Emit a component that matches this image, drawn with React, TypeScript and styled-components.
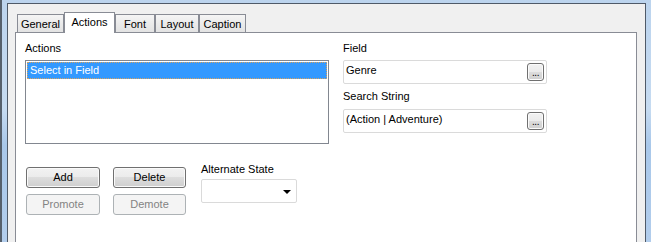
import styled, { createGlobalStyle } from 'styled-components'

const GlobalStyle = createGlobalStyle`
  html, body {
    margin: 0;
    padding: 0;
    overflow: hidden;
  }
  body {
    background: #b6cfea;
    font-family: "Liberation Sans", Arial, sans-serif;
    font-size: 11px;
    color: #000;
  }
`

const Desktop = styled.div`
  height: 242px;
  overflow: hidden;
  border-left: 2px solid #56606c;
  background: linear-gradient(180deg, #bcd4ee 0%, #c6dbf1 45%, #a9c8ea 60%, #b2cdec 100%);
  padding: 3px 5px 0 5px;
  box-sizing: border-box;
`

const Frame = styled.div`
  width: 639px;
  height: 260px;
  box-sizing: border-box;
  background: #f0f0f0;
  border: 1px solid #4f5a68;
  border-bottom: none;
  padding: 8px 0 0 7px;
  display: flex;
  flex-direction: column;
`

const TabStrip = styled.div`
  display: flex;
  align-items: flex-start;
  padding-left: 2px;
  height: 20px;
`

const Tab = styled.div<{ $active?: boolean; $w: number }>`
  position: relative;
  z-index: ${p => (p.$active ? 2 : 1)};
  box-sizing: border-box;
  width: ${p => p.$w}px;
  height: ${p => (p.$active ? 21 : 18)}px;
  margin-top: ${p => (p.$active ? 0 : 2)}px;
  padding-top: 3px;
  line-height: 13px;
  text-align: center;
  border: 1px solid #898c95;
  border-bottom: none;
  background: ${p =>
    p.$active ? '#ffffff' : 'linear-gradient(180deg, #f5f5f5 0%, #ebebeb 50%, #e3e3e3 100%)'};
  white-space: nowrap;
`

const Panel = styled.div`
  width: 622px;
  height: 260px;
  box-sizing: border-box;
  background: #fff;
  border: 1px solid #898c95;
  padding: 9px 0 0 9px;
`

const TopRow = styled.div`
  display: flex;
  gap: 14px;
`

const Column = styled.div<{ $w: number }>`
  display: flex;
  flex-direction: column;
  width: ${p => p.$w}px;
`

const Label = styled.div<{ $gap?: number }>`
  line-height: 13px;
  height: 13px;
  margin-top: ${p => p.$gap ?? 0}px;
  white-space: nowrap;
`

const ListBox = styled.div`
  margin-top: 5px;
  height: 84px;
  box-sizing: border-box;
  border: 1px solid #828790;
  padding: 1px;
`

const ListItem = styled.div`
  height: 17px;
  box-sizing: border-box;
  background: #3399ff;
  color: #fff;
  border: 1px dotted #d9a25e;
  padding-left: 2px;
  line-height: 14px;
`

const TextBox = styled.div<{ $gap: number }>`
  margin-top: ${p => p.$gap}px;
  height: 24px;
  box-sizing: border-box;
  border: 1px solid #dadada;
  border-radius: 2px;
  background: #fff;
  display: flex;
  align-items: flex-start;
  padding: 2px;
`

const FieldText = styled.span`
  margin-top: 1px;
  line-height: 13px;
  white-space: nowrap;
`

const DotsButton = styled.div`
  margin-left: auto;
  width: 17px;
  height: 18px;
  box-sizing: border-box;
  border: 1px solid #707070;
  border-radius: 3px;
  background: linear-gradient(180deg, #f2f2f2 0%, #ebebeb 50%, #dddddd 50%, #cfcfcf 100%);
  box-shadow: inset 0 0 0 1px #fbfbfb;
  display: flex;
  align-items: flex-end;
  justify-content: center;
  font-size: 10px;
  line-height: 10px;
  padding-bottom: 2px;
  letter-spacing: -0.5px;
`

const BottomRow = styled.div`
  display: flex;
  align-items: flex-start;
  margin-top: 19px;
  padding-left: 1px;
`

const ButtonGrid = styled.div`
  display: grid;
  grid-template-columns: 74px 73px;
  column-gap: 13px;
  row-gap: 6px;
  margin-top: 4px;
`

const Button = styled.div<{ $disabled?: boolean }>`
  height: 21px;
  box-sizing: border-box;
  border: 1px solid ${p => (p.$disabled ? '#adb2b5' : '#707070')};
  border-radius: 3px;
  background: ${p =>
    p.$disabled
      ? '#f4f4f4'
      : 'linear-gradient(180deg, #f2f2f2 0%, #ebebeb 50%, #dddddd 50%, #cfcfcf 100%)'};
  box-shadow: inset 0 0 0 1px ${p => (p.$disabled ? '#f4f4f4' : '#fafafa')};
  color: ${p => (p.$disabled ? '#838383' : '#000')};
  display: flex;
  align-items: center;
  justify-content: center;
  line-height: 13px;
`

const StateGroup = styled.div`
  display: flex;
  flex-direction: column;
  margin-left: 15px;
`

const Combo = styled.div`
  margin-top: 3px;
  width: 96px;
  height: 24px;
  box-sizing: border-box;
  border: 1px solid #dadada;
  border-radius: 2px;
  background: #fff;
  display: flex;
  align-items: center;
  justify-content: flex-end;
  padding-right: 5px;
`

const Arrow = styled.div`
  width: 0;
  height: 0;
  border-left: 4px solid transparent;
  border-right: 4px solid transparent;
  border-top: 4px solid #000;
  margin-top: 2px;
`

const tabs = [
  { label: 'General', w: 47 },
  { label: 'Actions', w: 51, active: true },
  { label: 'Font', w: 40 },
  { label: 'Layout', w: 44 },
  { label: 'Caption', w: 47 },
]

export default function App() {
  return (
    <>
      <GlobalStyle />
      <Desktop>
        <Frame>
          <TabStrip>
            {tabs.map(t => (
              <Tab key={t.label} $w={t.w} $active={t.active}>
                {t.label}
              </Tab>
            ))}
          </TabStrip>
          <Panel>
            <TopRow>
              <Column $w={304}>
                <Label>Actions</Label>
                <ListBox>
                  <ListItem>Select in Field</ListItem>
                </ListBox>
              </Column>
              <Column $w={204}>
                <Label>Field</Label>
                <TextBox $gap={5}>
                  <FieldText>Genre</FieldText>
                  <DotsButton>...</DotsButton>
                </TextBox>
                <Label $gap={6}>Search String</Label>
                <TextBox $gap={6}>
                  <FieldText>(Action | Adventure)</FieldText>
                  <DotsButton>...</DotsButton>
                </TextBox>
              </Column>
            </TopRow>
            <BottomRow>
              <ButtonGrid>
                <Button>Add</Button>
                <Button>Delete</Button>
                <Button $disabled>Promote</Button>
                <Button $disabled>Demote</Button>
              </ButtonGrid>
              <StateGroup>
                <Label>Alternate State</Label>
                <Combo>
                  <Arrow />
                </Combo>
              </StateGroup>
            </BottomRow>
          </Panel>
        </Frame>
      </Desktop>
    </>
  )
}
